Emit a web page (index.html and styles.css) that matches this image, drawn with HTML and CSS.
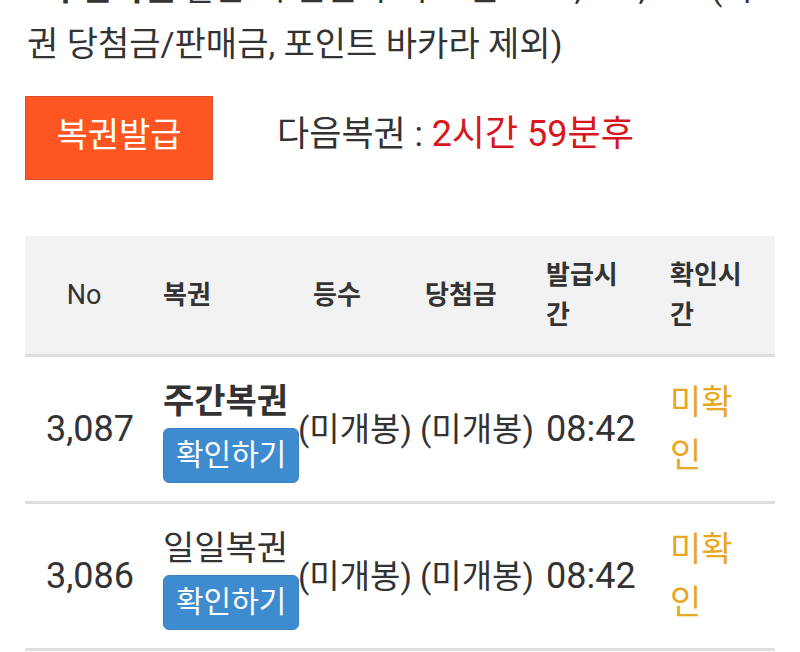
FILE: index.html
```html
<!DOCTYPE html>
<html lang="ko">
<head>
<meta charset="utf-8">
<title>복권발급</title>
<link rel="stylesheet" href="styles.css">
</head>
<body>
<div class="page">
  <p class="notice">* <b>주간복권</b> 발급 시 일일 누적 포인트 : 3,175,070 (복<br>권 당첨금/판매금, 포인트 바카라 제외)</p>

  <div class="issue-bar">
    <button class="issue-btn" type="button">복권발급</button>
    <div class="next">다음복권 : <span class="remain">2시간 59분후</span></div>
  </div>

  <table class="lotto">
    <colgroup>
      <col class="w1"><col class="w2"><col class="w3"><col class="w4"><col class="w5"><col class="w6">
    </colgroup>
    <thead>
      <tr>
        <th class="c1 no">No</th>
        <th class="c2">복권</th>
        <th class="c3 h3">등수</th>
        <th class="c4 h4">당첨금</th>
        <th class="c5">발급시간</th>
        <th class="c6">확인시간</th>
      </tr>
    </thead>
    <tbody>
      <tr>
        <td class="c1 num">3,087</td>
        <td class="c2"><div class="name strong">주간복권</div><button class="check-btn" type="button">확인하기</button></td>
        <td class="c3">(미개봉)</td>
        <td class="c4">(미개봉)</td>
        <td class="c5 num">08:42</td>
        <td class="c6 pending">미확인</td>
      </tr>
      <tr>
        <td class="c1 num">3,086</td>
        <td class="c2"><div class="name">일일복권</div><button class="check-btn" type="button">확인하기</button></td>
        <td class="c3">(미개봉)</td>
        <td class="c4">(미개봉)</td>
        <td class="c5 num">08:42</td>
        <td class="c6 pending">미확인</td>
      </tr>
    </tbody>
  </table>
</div>
</body>
</html>
```

FILE: styles.css
```css
html, body {
  margin: 0;
  padding: 0;
  overflow: hidden;
  background: #ffffff;
}

body {
  font-family: Roboto, "Noto Sans CJK KR", "Noto Sans", sans-serif;
  color: #333333;
  font-size: 34px;
  line-height: 1.7;
}

.page {
  padding: 0 25px;
}

.notice {
  margin: -40px 0 0 0;
  padding-left: 2px;
  white-space: nowrap;
  font-size: 34px;
  line-height: 56px;
  color: #333333;
}

.notice b {
  font-weight: 700;
}

.issue-bar {
  display: flex;
  align-items: center;
  gap: 64px;
  margin-top: 24px;
}

.issue-btn {
  height: 84px;
  width: 188px;
  padding: 0 0 6px 0;
  margin: 0;
  border: 1px solid #d4512a;
  background: #fe5622;
  color: #ffffff;
  font-family: inherit;
  font-size: 34px;
  line-height: 1;
}

.next {
  font-size: 35px;
  line-height: 1.4;
  color: #333333;
  padding-bottom: 8px;
}

.remain {
  color: #d7161d;
  font-size: 36px;
}

.lotto {
  margin-top: 56px;
  width: 750px;
  table-layout: fixed;
  border-collapse: collapse;
  border-spacing: 0;
}

.w1 { width: 130px; }
.w2 { width: 143px; }
.w3 { width: 122px; }
.w4 { width: 126px; }
.w5 { width: 116px; }
.w6 { width: 113px; }

.lotto th {
  background: #f2f2f2;
  font-size: 26px;
  line-height: 40px;
  font-weight: 700;
  text-align: left;
  vertical-align: middle;
  padding-top: 19px;
  padding-bottom: 19px;
  border-bottom: 3px solid #dddddd;
  color: #333333;
}

.lotto td {
  font-size: 34px;
  line-height: 53px;
  text-align: left;
  vertical-align: middle;
  padding-top: 18px;
  padding-bottom: 18px;
  border-bottom: 3px solid #dddddd;
}

.lotto td.num {
  font-size: 36px;
  white-space: nowrap;
}

.lotto .c1 { text-align: center; padding-left: 0; padding-right: 0; }
.lotto th.no { font-weight: 400; font-size: 27px; padding-right: 12px; }
.lotto .c2 { padding-left: 8px; padding-right: 0; }
.lotto .c3 { padding-left: 0; padding-right: 0; white-space: nowrap; }
.lotto .c4 { padding-left: 0; padding-right: 0; white-space: nowrap; }
.lotto td.c3, .lotto td.c4 { font-size: 33px; }
.lotto th.h3 { padding-left: 15px; }
.lotto th.h4 { padding-left: 5px; }
.lotto .c5 { padding-left: 0; padding-right: 26px; }
.lotto .c6 { padding-left: 8px; padding-right: 25px; }

.name {
  white-space: nowrap;
}

.name.strong {
  font-weight: 700;
}

.check-btn {
  display: block;
  height: 55px;
  padding: 0 12px 2px 12px;
  margin: 0;
  border: 1px solid #3a82c4;
  border-radius: 6px;
  background: #3f8bd0;
  color: #ffffff;
  font-family: inherit;
  font-size: 30px;
  line-height: 1;
  white-space: nowrap;
}

.pending {
  color: #e9a623;
}
```
